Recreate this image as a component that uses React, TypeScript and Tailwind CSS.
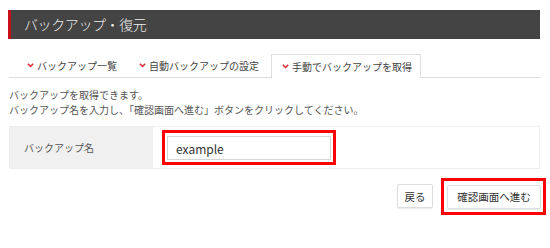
import React from "react";

const font = { fontFamily: '"Noto Sans CJK JP", "Noto Sans", sans-serif' };

const Chevron = () => (
  <svg width="7" height="5" viewBox="0 0 7 5" className="mr-[3px] shrink-0">
    <path d="M0.8 0.8 L3.5 3.6 L6.2 0.8" fill="none" stroke="#d7262e" strokeWidth="1.4" />
  </svg>
);

const tabs = [
  { label: "バックアップ一覧", active: false },
  { label: "自動バックアップの設定", active: false },
  { label: "手動でバックアップを取得", active: true },
];

export default function App() {
  return (
    <div className="w-[550px] h-[248px] bg-white pl-[8px] pr-[10px] pt-[10px] text-[#333]" style={font}>
      <div className="h-[29px] bg-[#444444] border-l-[3px] border-[#c8101b] flex items-center pl-[13px]">
        <span className="text-[14px] font-light text-[#eeeeee] tracking-[-0.4px]">バックアップ・復元</span>
      </div>

      <div className="mt-[15px] ml-[1px] flex items-end border-b border-[#dddddd] h-[24px] pl-[8px] gap-[2px]">
        {tabs.map((t) => (
          <div
            key={t.label}
            className={
              t.active
                ? "h-[24px] -mb-px flex items-center pl-[10px] pr-[8px] border border-b-0 border-[#dddddd] bg-white text-[10px] text-[#444]"
                : "h-[23px] flex items-center px-[10px] text-[10px] text-[#444]"
            }
          >
            <Chevron />
            <span>{t.label}</span>
          </div>
        ))}
      </div>

      <div className="mt-[9px] ml-[1px] text-[10px] leading-[15px] text-[#555]">
        <p>バックアップを取得できます。</p>
        <p>バックアップ名を入力し、「確認画面へ進む」ボタンをクリックしてください。</p>
      </div>

      <div className="mt-[9px] ml-[1px] flex h-[43px] border border-[#eeeeee]">
        <div className="w-[143px] bg-[#f0f0f0] flex items-center pl-[14px] text-[10px] text-[#555]">
          バックアップ名
        </div>
        <div className="flex-1 flex items-center pl-[9px]">
          <div className="border-[3px] border-[#ff0000] p-[2px]">
            <input
              className="w-[164px] h-[24px] border border-[#d4d4d4] px-[8px] text-[12px] text-[#333] outline-none"
              style={font}
              defaultValue="example"
            />
          </div>
        </div>
      </div>

      <div className="mt-[9px] flex justify-end items-center gap-[8px] -mr-[6px]">
        <button className="h-[24px] w-[36px] bg-white border border-[#dddddd] rounded-[2px] shadow-[0_1px_1px_rgba(0,0,0,0.08)] text-[10.5px] text-[#333]">
          戻る
        </button>
        <div className="border-[3px] border-[#ff0000] pt-[1px] pb-[3px] pl-[3px] pr-[2px]">
          <button className="h-[24px] w-[94px] bg-white border border-[#dddddd] rounded-[2px] shadow-[0_1px_1px_rgba(0,0,0,0.08)] text-[10.5px] text-[#333]">
            確認画面へ進む
          </button>
        </div>
      </div>
    </div>
  );
}
